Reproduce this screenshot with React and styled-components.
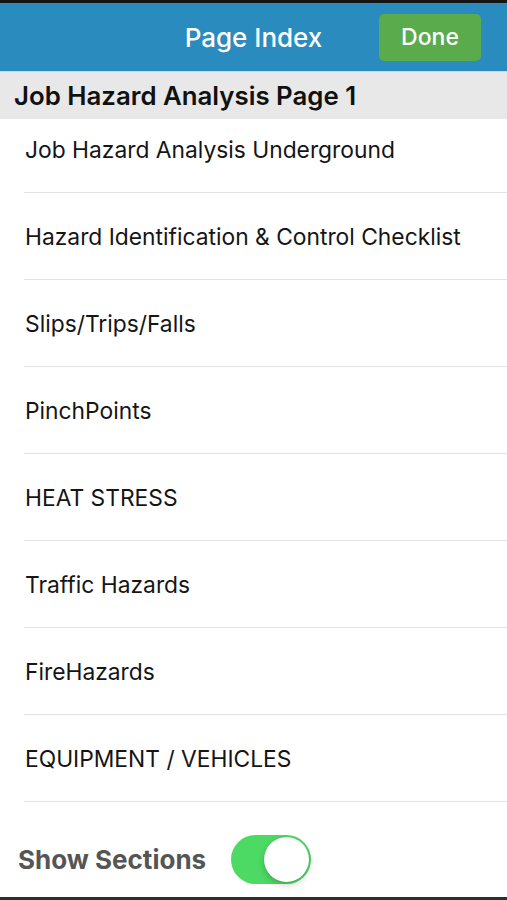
import React from "react";
import styled, { createGlobalStyle } from "styled-components";

const GlobalStyle = createGlobalStyle`
  html, body {
    margin: 0;
    padding: 0;
    background: #ffffff;
  }
  body {
    font-family: Inter, "Liberation Sans", Arial, sans-serif;
    -webkit-font-smoothing: antialiased;
  }
`;

const Screen = styled.div`
  width: 507px;
  height: 900px;
  display: flex;
  flex-direction: column;
  overflow: hidden;
  background: #ffffff;
  border-top: 3px solid #161616;
  border-bottom: 3px solid #2e2e2e;
  box-sizing: border-box;
`;

const NavBar = styled.div`
  flex: 0 0 68px;
  display: grid;
  grid-template-columns: 1fr auto 1fr;
  align-items: center;
  background-color: #2a8bbe;
`;

const NavTitle = styled.div`
  grid-column: 2;
  color: #ffffff;
  font-size: 26px;
  font-weight: 500;
`;

const DoneButton = styled.button`
  grid-column: 3;
  justify-self: end;
  margin-right: 26px;
  width: 102px;
  height: 47px;
  border: none;
  outline: none;
  border-radius: 5px;
  background-color: #5aab4b;
  color: #ffffff;
  font-family: inherit;
  font-size: 23px;
  font-weight: 500;
  padding: 0;
`;

const SectionHeader = styled.div`
  flex: 0 0 47px;
  display: flex;
  align-items: center;
  padding-left: 14px;
  background-color: #e8e8e8;
  border-top: 1px solid #c9d6de;
  color: #111111;
  font-size: 25.8px;
  font-weight: 600;
`;

const List = styled.div`
  flex: 1;
  overflow: hidden;
`;

const Row = styled.div`
  height: 86px;
  margin-left: 24px;
  margin-top: ${props => (props.$scrolled ? "-13px" : "0")};
  display: flex;
  align-items: center;
  padding-left: 1px;
  border-bottom: 1px solid #e2e2e2;
  color: #151515;
  font-size: 22.8px;
  font-weight: 400;
`;

const Footer = styled.div`
  flex: 0 0 95px;
  box-sizing: border-box;
  display: flex;
  align-items: center;
  gap: 25px;
  padding: 20px 0 0 18px;
`;

const FooterLabel = styled.div`
  color: #555555;
  font-size: 26px;
  font-weight: 700;
`;

const Toggle = styled.div`
  position: relative;
  width: 80px;
  height: 49px;
  border-radius: 25px;
  background-color: ${props => (props.$on ? "#4cd964" : "#e5e5e5")};
`;

const Knob = styled.div`
  position: absolute;
  top: 2px;
  left: ${props => (props.$on ? "33px" : "2px")};
  width: 45px;
  height: 45px;
  border-radius: 50%;
  background: #ffffff;
  box-shadow: 0 3px 6px rgba(0, 0, 0, 0.2), 0 0 1px rgba(0, 0, 0, 0.15);
`;

const pages = [
  "Job Hazard Analysis Underground",
  "Hazard Identification & Control Checklist",
  "Slips/Trips/Falls",
  "PinchPoints",
  "HEAT STRESS",
  "Traffic Hazards",
  "FireHazards",
  "EQUIPMENT / VEHICLES",
];

export default function App() {
  return (
    <>
      <GlobalStyle />
      <Screen>
        <NavBar>
          <NavTitle>Page Index</NavTitle>
          <DoneButton>Done</DoneButton>
        </NavBar>
        <SectionHeader>Job Hazard Analysis Page 1</SectionHeader>
        <List>
          {pages.map((p, i) => (
            <Row key={p} $scrolled={i === 0}>
              {p}
            </Row>
          ))}
        </List>
        <Footer>
          <FooterLabel>Show Sections</FooterLabel>
          <Toggle $on>
            <Knob $on />
          </Toggle>
        </Footer>
      </Screen>
    </>
  );
}
